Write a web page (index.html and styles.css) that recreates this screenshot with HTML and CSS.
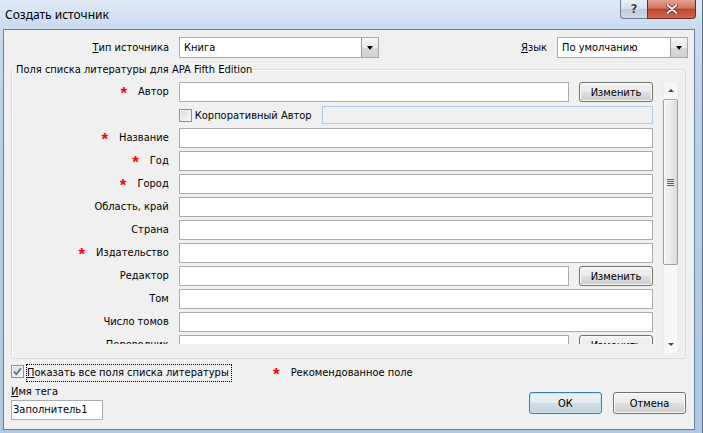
FILE: index.html
```html
<!DOCTYPE html>
<html lang="ru">
<head>
<meta charset="utf-8">
<title>Создать источник</title>
<link rel="stylesheet" href="styles.css">
</head>
<body>
<div class="window">
  <div class="titlebar">
    <div class="title">Создать источник</div>
    <div class="caption-buttons">
      <div class="cap-btn help">?</div>
      <div class="cap-btn close">
        <svg width="12" height="10" viewBox="0 0 12 10"><path d="M1.5 1 L10.5 9 M10.5 1 L1.5 9" stroke="#5b2a22" stroke-width="3.4" stroke-linecap="round"/><path d="M1.5 1 L10.5 9 M10.5 1 L1.5 9" stroke="#ffffff" stroke-width="1.8" stroke-linecap="round"/></svg>
      </div>
    </div>
  </div>
  <div class="client">
    <div class="top-row">
      <div class="lbl type-lbl"><u>Т</u>ип источника</div>
      <div class="combo combo-type"><span class="combo-text">Книга</span><span class="drop"><span class="tri"></span></span></div>
      <div class="lbl lang-lbl"><u>Я</u>зык</div>
      <div class="combo combo-lang"><span class="combo-text">По умолчанию</span><span class="drop"><span class="tri"></span></span></div>
    </div>
    <fieldset class="group">
      <legend>Поля списка литературы для APA Fifth Edition</legend>
      <div class="group-body">
        <div class="fields">
          <div class="row"><div class="rl"><span class="star">*</span>Автор</div><div class="field"><div class="tb"></div><div class="btn small">Изменить</div></div></div>
          <div class="row"><div class="rl"></div><div class="field"><span class="cb"></span><span class="cb-text">Корпоративный Автор</span><div class="tb disabled"></div></div></div>
          <div class="row"><div class="rl"><span class="star">*</span>Название</div><div class="field"><div class="tb"></div></div></div>
          <div class="row"><div class="rl"><span class="star">*</span>Год</div><div class="field"><div class="tb"></div></div></div>
          <div class="row"><div class="rl"><span class="star">*</span>Город</div><div class="field"><div class="tb"></div></div></div>
          <div class="row"><div class="rl">Область, край</div><div class="field"><div class="tb"></div></div></div>
          <div class="row"><div class="rl">Страна</div><div class="field"><div class="tb"></div></div></div>
          <div class="row"><div class="rl"><span class="star">*</span>Издательство</div><div class="field"><div class="tb"></div></div></div>
          <div class="row"><div class="rl">Редактор</div><div class="field"><div class="tb"></div><div class="btn small">Изменить</div></div></div>
          <div class="row"><div class="rl">Том</div><div class="field"><div class="tb"></div></div></div>
          <div class="row"><div class="rl">Число томов</div><div class="field"><div class="tb"></div></div></div>
          <div class="row"><div class="rl">Переводчик</div><div class="field"><div class="tb"></div><div class="btn small">Изменить</div></div></div>
        </div>
        <div class="scrollbar">
          <div class="sb-arrow"><span class="tri-up"></span></div>
          <div class="sb-thumb"><span class="grip"></span></div>
          <div class="sb-track"></div>
          <div class="sb-arrow"><span class="tri-down"></span></div>
        </div>
      </div>
    </fieldset>
    <div class="bottom-row1">
      <div class="show-all">
        <span class="cb checked"><svg width="11" height="11" viewBox="0 0 11 11"><path d="M2 5.5 L4.3 8.2 L9 2.2" fill="none" stroke="#566b8c" stroke-width="1.7"/></svg></span>
        <span class="focus-text"><u>П</u>оказать все поля списка литературы</span>
      </div>
      <div class="recommended"><span class="star">*</span>Рекомендованное поле</div>
    </div>
    <div class="bottom-row2">
      <div class="tag">
        <div class="tag-lbl"><u>И</u>мя тега</div>
        <div class="tb tag-input">Заполнитель1</div>
      </div>
      <div class="actions">
        <div class="btn big default">ОК</div>
        <div class="btn big">Отмена</div>
      </div>
    </div>
  </div>
</div>
</body>
</html>
```

FILE: styles.css
```css
* { box-sizing: border-box; }
html, body { margin: 0; padding: 0; }
body {
  width: 703px;
  height: 433px;
  overflow: hidden;
  background: #bcd3ea;
  font-family: "DejaVu Sans Condensed", "DejaVu Sans", sans-serif;
  font-size: 11px;
  color: #000;
}
.window {
  width: 703px;
  height: 433px;
  display: flex;
  flex-direction: column;
  padding: 0 7px 3px 3px;
  background: linear-gradient(180deg, #dfe9f5 0px, #cadcef 28px, #b9d1ea 120px, #adc9e6 433px);
  border-right: 1px solid #5d6f82;
}
.titlebar {
  height: 29px;
  flex: none;
  display: flex;
  justify-content: space-between;
  align-items: flex-start;
}
.title {
  font-family: "Noto Sans", "Open Sans", sans-serif;
  font-size: 12px;
  line-height: 16px;
  padding: 7px 0 0 2px;
  color: #000;
}
.caption-buttons {
  display: flex;
  margin-right: -1px;
}
.cap-btn {
  height: 19px;
  display: flex;
  align-items: center;
  justify-content: center;
  border: 1px solid #6b7c8f;
  border-top: none;
}
.help {
  width: 27px;
  border-right: none;
  border-bottom-left-radius: 4px;
  background: linear-gradient(180deg, #e9f0f8 0%, #d3e0ee 48%, #bccbdc 52%, #cfdbe8 100%);
  font: bold 12px "DejaVu Sans", sans-serif;
  color: #3d4652;
  text-shadow: 0 0 2px #fff;
}
.close {
  width: 49px;
  border-bottom-right-radius: 4px;
  border-color: #6c2c22;
  background: linear-gradient(180deg, #e7a294 0%, #d5745f 45%, #c2452c 52%, #cf6a51 100%);
}
.client {
  flex: 1;
  border: 1px solid #6d7e90;
  background: #f0f0f0;
  padding: 7px 6px 0 7px;
  display: flex;
  flex-direction: column;
}
.top-row {
  display: flex;
  align-items: center;
  height: 21px;
}
.lbl { line-height: 13px; white-space: nowrap; }
.type-lbl { width: 158px; text-align: right; margin-right: 10px; }
.lang-lbl { margin-left: auto; margin-right: 10px; }
.combo {
  height: 21px;
  border: 1px solid #a7a9ae;
  background: #fff;
  display: flex;
  align-items: stretch;
}
.combo-type { width: 200px; }
.combo-lang { width: 131px; }
.combo-text { padding-left: 4px; line-height: 19px; }
.drop {
  margin-left: auto;
  width: 17px;
  border-left: 1px solid #9a9a9a;
  background: linear-gradient(180deg, #f6f6f6 0%, #e9e9e9 50%, #d9d9d9 51%, #d2d2d2 100%);
  display: flex;
  align-items: center;
  justify-content: center;
}
.tri {
  width: 0;
  height: 0;
  border-left: 3.5px solid transparent;
  border-right: 3.5px solid transparent;
  border-top: 4px solid #000;
}
.group {
  margin: 5px 2px 0 0;
  padding: 0;
  min-width: 0;
  border: 1px solid #d3dde5;
  border-radius: 3px;
  box-shadow: inset 1px 1px 0 #fff;
}
.group legend {
  margin-left: 2px;
  padding: 0 2px;
  line-height: 13px;
}
.group-body {
  display: flex;
  align-items: flex-start;
  padding: 6px 6px 5px 0;
}
.fields {
  width: 642px;
  height: 262px;
  overflow: hidden;
  margin-right: 9px;
  display: flex;
  flex-direction: column;
  gap: 3px;
}
.row {
  flex: none;
  display: flex;
  align-items: center;
  height: 20px;
}
.rl {
  width: 157px;
  margin-right: 10px;
  text-align: right;
  line-height: 20px;
  white-space: nowrap;
}
.star {
  color: #ff0000;
  font: bold 17px "Liberation Sans", sans-serif;
  line-height: 10px;
  vertical-align: -4px;
  margin-right: 11px;
}
.field {
  width: 475px;
  height: 20px;
  display: flex;
  align-items: center;
}
.tb {
  flex: 1;
  height: 20px;
  border: 1px solid #a9abb0;
  background: #fff;
}
.tb.disabled {
  flex: none;
  width: 331px;
  height: 18px;
  margin-left: auto;
  border-color: #aecbe6;
  background: #f0f0f0;
}
.cb {
  flex: none;
  width: 13px;
  height: 13px;
  border: 1px solid #8e8f8f;
  background: linear-gradient(135deg, #d9d9d9 0%, #eeeeee 60%, #fafafa 100%);
  box-shadow: inset 0 0 0 1px #f4f4f4;
  display: inline-flex;
  align-items: center;
  justify-content: center;
}
.cb-text { margin-left: 3px; white-space: nowrap; }
.btn {
  flex: none;
  border: 1px solid #707070;
  border-radius: 3px;
  background: linear-gradient(180deg, #f3f3f3 0%, #ebebeb 48%, #dddddd 52%, #cfcfcf 100%);
  box-shadow: inset 0 0 0 1px #fbfbfb;
  display: flex;
  align-items: center;
  justify-content: center;
  white-space: nowrap;
}
.btn.small { width: 74px; height: 20px; margin-left: 10px; }
.btn.big { width: 73px; height: 22px; }
.btn.default {
  border-color: #3c7fb1;
  box-shadow: inset 0 0 0 1px #bfe3f7;
  background: linear-gradient(180deg, #eaf3f9 0%, #e1ebf2 48%, #d2dde6 52%, #c6d3de 100%);
}
.scrollbar {
  width: 17px;
  height: 271px;
  display: flex;
  flex-direction: column;
  background: linear-gradient(90deg, #e4e4e4 0%, #f6f6f6 15%, #f8f8f8 85%, #e6e6e6 100%);
}
.sb-arrow {
  height: 17px;
  flex: none;
  display: flex;
  align-items: center;
  justify-content: center;
}
.tri-up {
  width: 0; height: 0;
  border-left: 3.5px solid transparent;
  border-right: 3.5px solid transparent;
  border-bottom: 3px solid #4a4a4a;
}
.tri-down {
  width: 0; height: 0;
  border-left: 3.5px solid transparent;
  border-right: 3.5px solid transparent;
  border-top: 3px solid #4a4a4a;
}
.sb-thumb {
  flex: none;
  height: 166px;
  width: 15px;
  margin-left: 1px;
  border: 1px solid #a1a1a1;
  border-radius: 2px;
  background: linear-gradient(90deg, #f3f3f3 0%, #ebebeb 50%, #d9d9d9 100%);
  box-shadow: inset 1px 1px 0 #fcfcfc;
  display: flex;
  align-items: center;
  justify-content: center;
}
.grip {
  width: 7px;
  height: 7px;
  background: repeating-linear-gradient(180deg, #5f5f5f 0px, #5f5f5f 1px, #e9e9e9 1px, #e9e9e9 2px);
}
.sb-track { flex: 1; }
.bottom-row1 {
  display: flex;
  align-items: flex-start;
  margin-top: 5px;
  height: 18px;
}
.show-all {
  width: 262px;
  display: flex;
  align-items: flex-start;
}
.show-all .cb { margin-top: 1px; margin-right: 2px; background: linear-gradient(135deg, #dadada 0%, #ececec 60%, #f7f7f7 100%); }
.focus-text {
  border: 1px dotted #000;
  padding: 0 2px 0 0;
  line-height: 16px;
  white-space: nowrap;
}
.recommended {
  line-height: 18px;
  white-space: nowrap;
}
.recommended .star { margin-right: 11px; }
.bottom-row2 {
  display: flex;
  margin-top: 3px;
  padding-right: 2px;
}
.tag-lbl { line-height: 13px; }
.tag-input {
  width: 92px;
  margin-top: 2px;
  padding-left: 1px;
  line-height: 18px;
}
.actions {
  margin-left: auto;
  margin-top: 7px;
  display: flex;
  gap: 11px;
}
```
